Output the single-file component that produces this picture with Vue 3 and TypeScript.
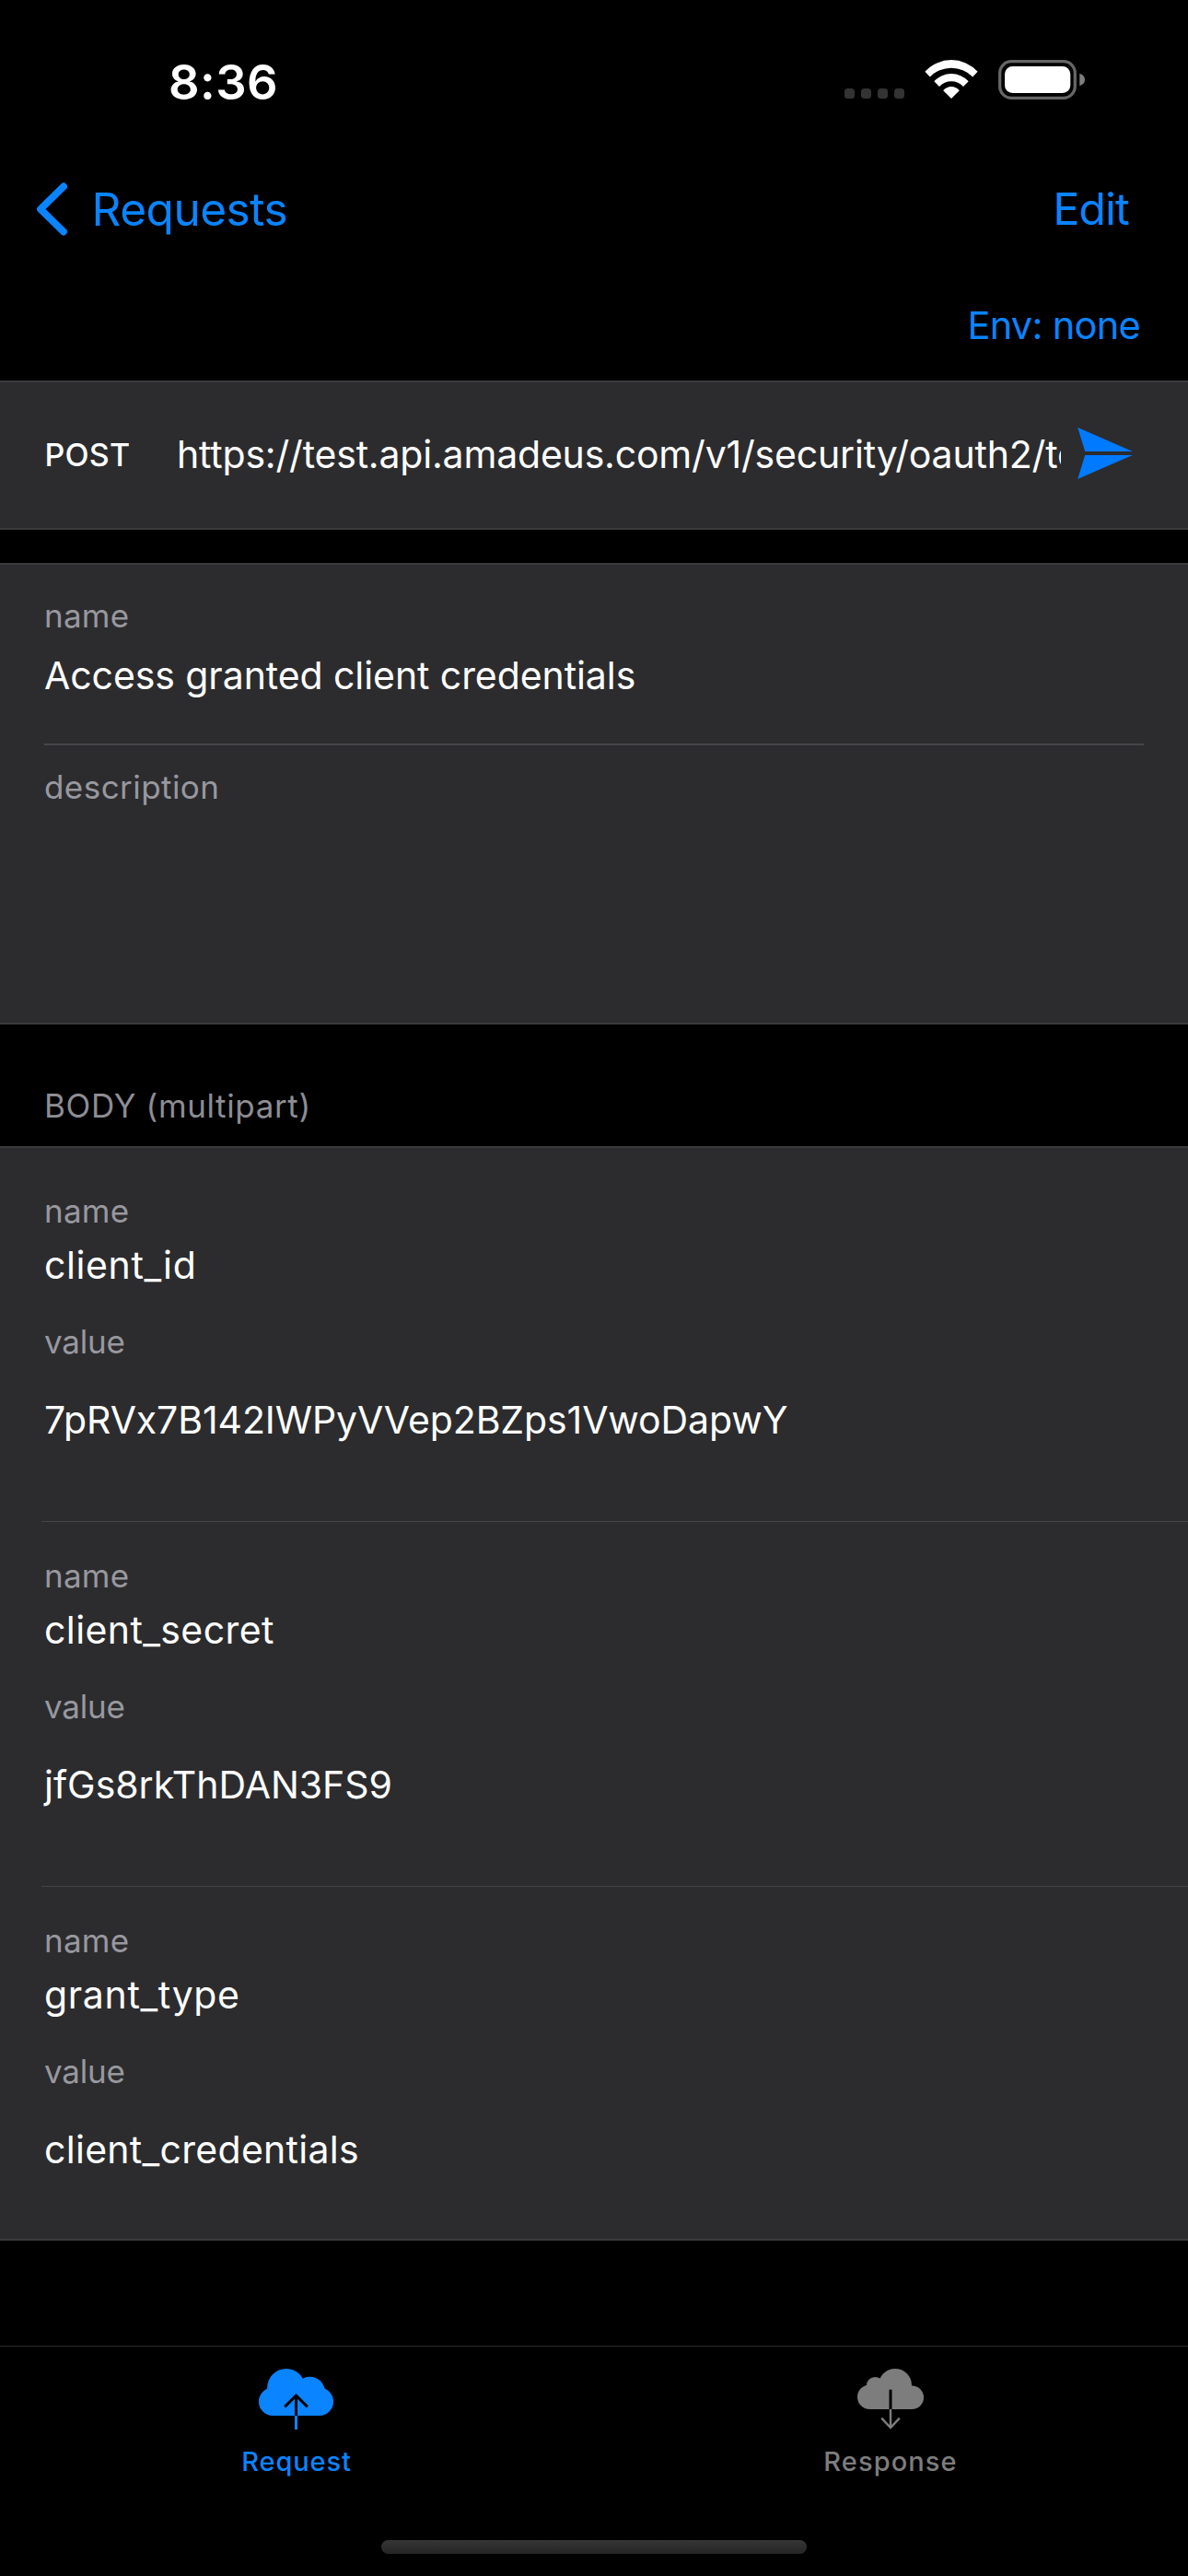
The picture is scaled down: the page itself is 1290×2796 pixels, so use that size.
<script setup lang="ts">
interface BodyPart {
  name: string
  value: string
  nameSpacing: string
  valueSpacing: string
}

const parts: BodyPart[] = [
  { name: 'client_id', value: '7pRVx7B142IWPyVVep2BZps1VwoDapwY', nameSpacing: '0.6px', valueSpacing: '-0.1px' },
  { name: 'client_secret', value: 'jfGs8rkThDAN3FS9', nameSpacing: '0.4px', valueSpacing: '-0.02px' },
  { name: 'grant_type', value: 'client_credentials', nameSpacing: '0.64px', valueSpacing: '0.29px' },
]
</script>

<template>
  <main class="screen">
    <header class="status">
      <span class="time">8:36</span>
      <div class="cell"><i v-for="n in 4" :key="n"></i></div>
      <svg class="wifi" width="58" height="42" viewBox="0 0 58 42" fill="#fff">
        <path d="M.4 12.8A38.5 38.5 0 0 1 57.6 12.8L52.2 18.4A32.6 32.6 0 0 0 5.8 18.4Z" />
        <path d="M10.3 23.2A25.4 25.4 0 0 1 47.7 23.2L42 29A17.7 17.7 0 0 0 16 29Z" />
        <path d="M20.2 33.2A11.4 11.4 0 0 1 37.8 33.2L29 42Z" />
      </svg>
      <svg class="battery" width="95" height="43" viewBox="0 0 95 43">
        <rect x="1.7" y="1.7" width="81.6" height="39.6" rx="12.5" fill="none" stroke="#666" stroke-width="3.3" />
        <rect x="7" y="7" width="71.3" height="29" rx="8.5" fill="#fff" />
        <path d="M88.3 14.8Q94 17 94 21.5T88.3 28.2Z" fill="#7f7f7f" />
      </svg>
    </header>

    <nav class="nav">
      <svg width="41" height="66" viewBox="0 0 41 66" fill="none" stroke="#0a84ff" stroke-width="7.8" stroke-linecap="round" stroke-linejoin="round">
        <path d="M37 8.5L12 33L37 57.5" />
      </svg>
      <span class="back">Requests</span>
      <span class="edit">Edit</span>
    </nav>
    <div class="env"><span>Env: none</span></div>

    <section class="panel url-panel">
      <span class="method">POST</span>
      <span class="url">https://test.api.amadeus.com/v1/security/oauth2/token</span>
      <svg width="60" height="56" viewBox="0 0 60 56" fill="#007aff">
        <path d="M.2 0L59.8 26.1H8.2Z" />
        <path d="M8.2 29.9H59.8L.2 56Z" />
      </svg>
    </section>

    <section class="panel info-panel">
      <div class="label name-label">name</div>
      <div class="text title">Access granted client credentials</div>
      <div class="rule"></div>
      <div class="label desc-label">description</div>
    </section>

    <h2 class="section-title">BODY (multipart)</h2>

    <section class="panel body-panel">
      <div v-for="p in parts" :key="p.name" class="part">
        <div class="label name-label">name</div>
        <div class="text key" :style="{ letterSpacing: p.nameSpacing }">{{ p.name }}</div>
        <div class="label value-label">value</div>
        <div class="text val" :style="{ letterSpacing: p.valueSpacing }">{{ p.value }}</div>
      </div>
    </section>

    <footer class="tabs">
      <div class="tab active">
        <svg width="90" height="70" viewBox="0 0 90 70">
          <g fill="#0a84ff">
            <circle cx="33.8" cy="22.6" r="20.6" />
            <circle cx="59.5" cy="27" r="16.3" />
            <circle cx="19.2" cy="37.8" r="15.2" />
            <circle cx="69.8" cy="37.8" r="15.2" />
            <path d="M19.2 53V30L33 20H60L69.8 30V53Z" />
            <rect x="43" y="53" width="3" height="15" />
          </g>
          <path d="M44.5 53V31.4M32.2 43.4L44.5 31.1L56.8 43.4" fill="none" stroke="#000" stroke-width="3" />
        </svg>
        <span>Request</span>
      </div>
      <div class="tab">
        <svg width="90" height="70" viewBox="0 0 90 70">
          <g fill="#7d7d7d">
            <circle cx="50" cy="20" r="18" />
            <circle cx="28.5" cy="20.8" r="9.8" />
            <circle cx="22.3" cy="32.7" r="13.3" />
            <circle cx="68.3" cy="33.3" r="12.7" />
            <path d="M22.3 46V28L30 18H60L68.3 28V46Z" />
          </g>
          <path d="M45 24.7V46" stroke="#000" stroke-width="3" />
          <path d="M45 46V66M35.2 55.6L45 66L54.8 55.6" fill="none" stroke="#7d7d7d" stroke-width="2.4" />
        </svg>
        <span>Response</span>
      </div>
    </footer>
    <div class="home"></div>
  </main>
</template>

<style>
body {
  margin: 0;
  background: #000;
}
</style>

<style scoped>
.screen {
  width: 1290px;
  height: 2796px;
  overflow: hidden;
  background: #000;
  color: #fff;
  font-family: Inter, 'Liberation Sans', sans-serif;
  display: flex;
  flex-direction: column;
  white-space: nowrap;
}
.screen > * {
  flex: none;
  box-sizing: border-box;
}
svg {
  display: block;
  flex: none;
}

.status {
  height: 194px;
  padding: 56px 111px 0 183px;
  display: flex;
  align-items: flex-start;
}
.time {
  margin-top: 1px;
  font-size: 52.5px;
  font-weight: 600;
  line-height: 64px;
  letter-spacing: 0.4px;
}
.cell {
  margin: 40px 22px 0 auto;
  display: flex;
  gap: 7px;
}
.cell i {
  width: 11px;
  height: 11px;
  border-radius: 3.5px;
  background: #333;
}
.wifi {
  margin-top: 9px;
}
.battery {
  margin: 9px 0 0 22.5px;
}

.nav {
  height: 134px;
  padding: 0 0 0 32px;
  display: flex;
  align-items: flex-start;
  color: #0a84ff;
  font-size: 49.5px;
  line-height: 60px;
}
.back {
  margin: 3px 0 0 26.5px;
  letter-spacing: -0.47px;
}
.edit {
  margin: 3px 0 0 auto;
  width: 146.5px;
  font-size: 48px;
  letter-spacing: -0.8px;
}
.env {
  height: 85px;
  display: flex;
  justify-content: flex-end;
  color: #0a84ff;
  font-size: 41.5px;
  line-height: 50px;
  letter-spacing: -0.7px;
}
.env span {
  width: 239.6px;
}

.panel {
  background: #2c2c2e;
  border-top: 2px solid #3b3b3d;
  border-bottom: 2px solid #3b3b3d;
}
.url-panel {
  height: 162px;
  padding-left: 48.5px;
  display: flex;
  align-items: flex-start;
}
.method {
  width: 143.5px;
  margin-top: 59px;
  font-size: 34px;
  font-weight: 500;
  line-height: 40px;
  letter-spacing: 0.19px;
}
.url {
  width: 960px;
  margin-top: 53px;
  overflow: hidden;
  font-size: 41px;
  line-height: 50px;
  letter-spacing: -0.19px;
}
.url-panel svg {
  margin: 48.6px 0 0 18px;
}

.label {
  color: #98989f;
  font-size: 35px;
  line-height: 42px;
  letter-spacing: 0.24px;
}
.text {
  font-size: 41px;
  line-height: 50px;
}

.info-panel {
  height: 501px;
  margin-top: 36px;
  padding: 34px 48px 0;
}
.title {
  margin-top: 19px;
  letter-spacing: -0.08px;
}
.rule {
  height: 2px;
  margin-top: 49px;
  background: #464649;
}
.desc-label {
  margin-top: 24px;
  letter-spacing: 0.44px;
}

.section-title {
  height: 132px;
  margin: 0;
  padding: 67px 0 0 48px;
  color: #8d8d93;
  font-size: 35px;
  font-weight: 400;
  line-height: 42px;
  letter-spacing: 0.63px;
}

.body-panel {
  height: 1188px;
  padding: 10px 0 0 45px;
}
.part {
  box-sizing: border-box;
  height: 396px;
  padding: 37px 0 0 3px;
  border-bottom: 1px solid #454548;
}
.part:last-child {
  height: 382px;
  border-bottom: 0;
}
.key {
  margin-top: 13px;
}
.value-label {
  margin-top: 37px;
  letter-spacing: -0.2px;
}
.val {
  margin-top: 39px;
}

.tabs {
  height: 211px;
  margin-top: 114px;
  border-top: 1px solid #2b2b2b;
  display: grid;
  grid-template-columns: 644px 646px;
}
.tab {
  padding-top: 22px;
  display: flex;
  flex-direction: column;
  align-items: center;
  color: #7d7d7d;
  font-size: 29px;
  font-weight: 500;
  letter-spacing: 1.11px;
}
.tab span {
  margin-top: 16px;
  line-height: 34px;
}
.tab.active {
  color: #0a84ff;
  letter-spacing: 0.9px;
}

.home {
  width: 462px;
  height: 15px;
  margin-left: 414px;
  border-radius: 7.5px;
  background: linear-gradient(#373637, #252525);
}
</style>
